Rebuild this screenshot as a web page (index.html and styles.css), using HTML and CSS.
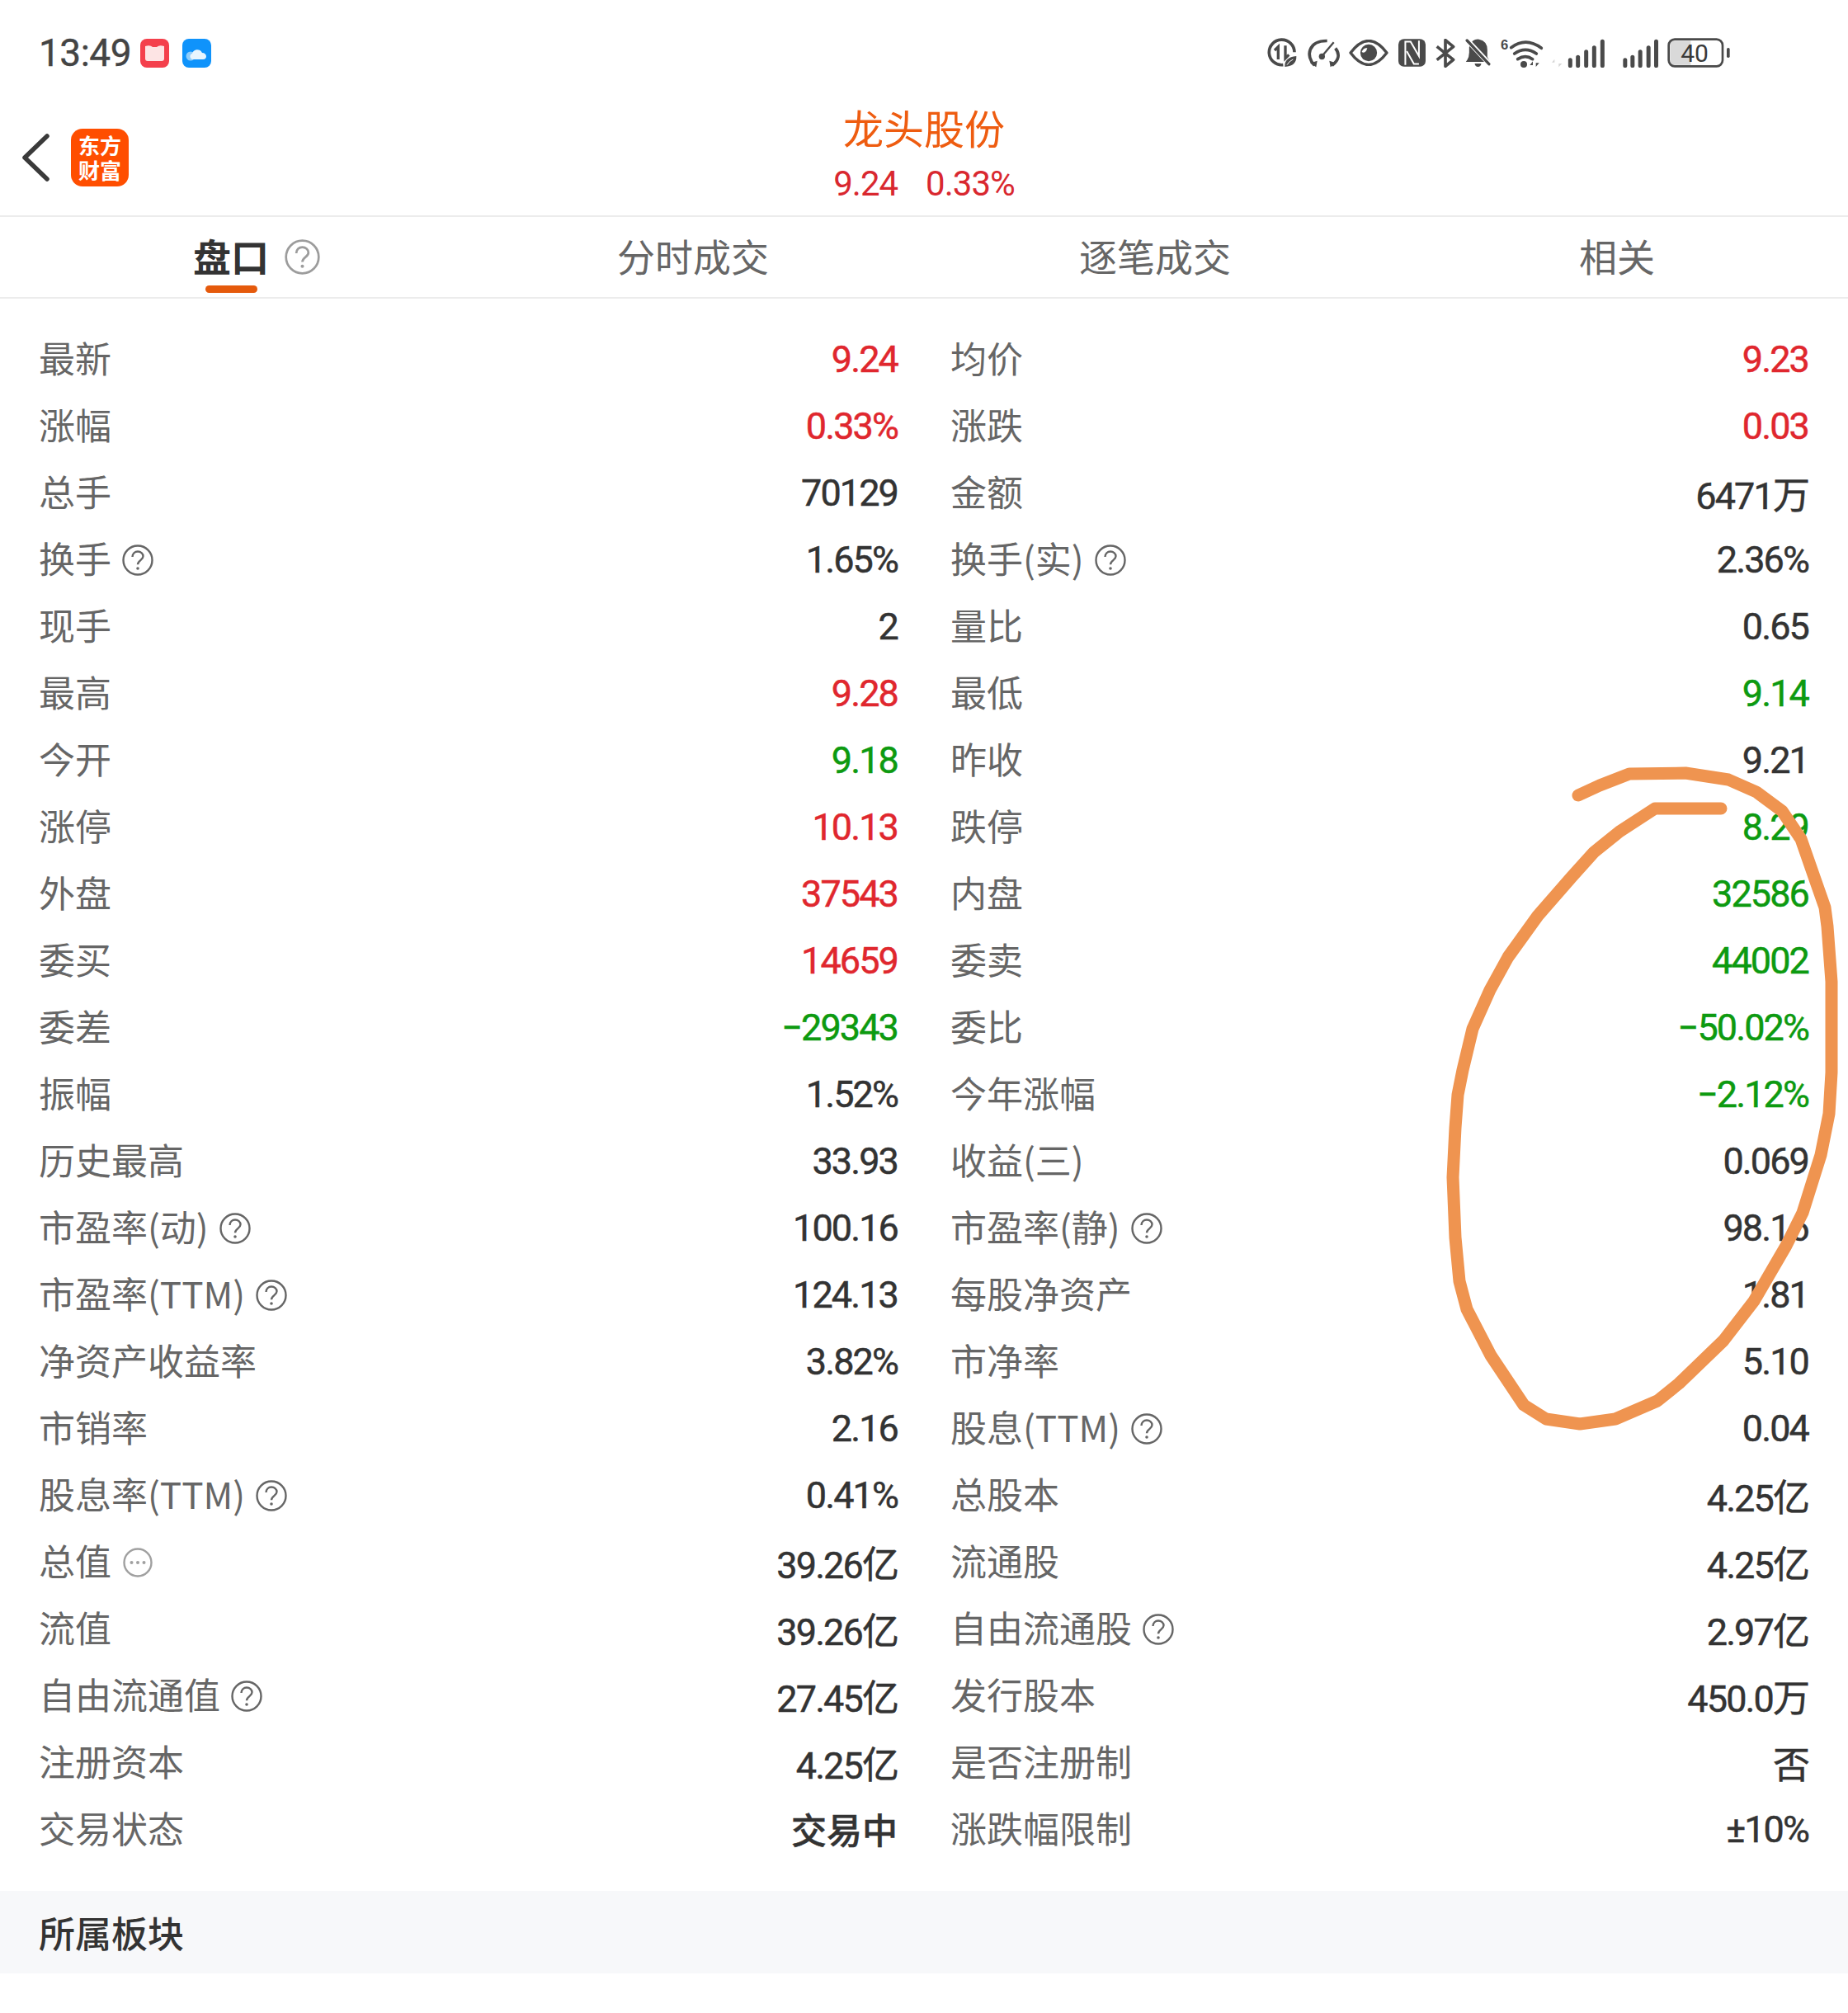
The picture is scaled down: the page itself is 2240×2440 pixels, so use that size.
FILE: index.html
```html
<!DOCTYPE html>
<html lang="zh-CN">

<head>
    <meta charset="UTF-8">
    <title>龙头股份 盘口</title>
    <link rel="stylesheet" href="styles.css">
</head>

<body>
    <svg class="defs" width="0" height="0">
        <symbol id="help" viewBox="0 0 38 38">
            <circle cx="19" cy="19" r="17.500" fill="none" stroke="currentColor" stroke-width="2.400" />
            <path d="M12.500 15c0-4 3-6.500 6.500-6.500s6.500 2.500 6.500 5.800c0 4.700-6.500 5-6.500 10" fill="none" stroke="currentColor" stroke-width="2.400" />
            <circle cx="19" cy="29" r="1.800" fill="currentColor" />
        </symbol>
        <symbol id="more" viewBox="0 0 38 38">
            <circle cx="19" cy="19" r="16.500" fill="none" stroke="currentColor" stroke-width="2.400" />
            <circle cx="11.500" cy="19" r="2" fill="currentColor" />
            <circle cx="19" cy="19" r="2" fill="currentColor" />
            <circle cx="26.500" cy="19" r="2" fill="currentColor" />
        </symbol>
    </svg>

    <div class="page">
        <!-- 状态栏 -->
        <div class="statusbar">
            <div class="status-left">
                <span class="clock">13:49</span>
                <svg class="app-icon" width="35" height="35" viewBox="0 0 35 35">
                    <rect width="35" height="35" rx="8" fill="#f4404c" />
                    <path d="M6 9q6-2 9 1h5q3-3 9-1v15q0 3-3 3H9q-3 0-3-3z" fill="#fde4e4" />
                </svg>
                <svg class="app-icon app-icon-cloud" width="35" height="35" viewBox="0 0 35 35">
                    <rect width="35" height="35" rx="8" fill="#0f93fb" />
                    <circle cx="10" cy="21" r="5.500" fill="#8fcdfb" />
                    <path d="M13 25c-4 0-5-6-1-7 1-5 9-7 12-1 6 0 7 8 1 8z" fill="#e8f5fe" />
                </svg>
            </div>
            <div class="status-right">
                <!-- 流量节省 -->
                <svg width="36" height="36" viewBox="0 0 108 108">
                    <path d="M58 98A46 46 0 1 1 99 52" fill="none" stroke="#4a4a4a" stroke-width="11" />
                    <path d="M40 78V32L27 45M66 28V74L79 61" fill="none" stroke="#4a4a4a" stroke-width="10" />
                    <path d="M64 105Q62 70 106 66Q108 102 64 105z" fill="#4a4a4a" />
                    <path d="M72 98Q80 84 94 78" fill="none" stroke="#fff" stroke-width="3" />
                </svg>
                <!-- 网速 -->
                <svg width="40" height="35" viewBox="0 0 120 104">
                    <path d="M28 96C-6 62 6 6 74 7" fill="none" stroke="#4a4a4a" stroke-width="11" />
                    <path d="M104 34C122 56 116 78 92 96" fill="none" stroke="#4a4a4a" stroke-width="11" />
                    <path d="M34 102L12 88L38 80zM86 102L108 88L82 80z" fill="#4a4a4a" />
                    <path d="M56 62L98 12" stroke="#4a4a4a" stroke-width="7" />
                    <circle cx="55" cy="64" r="11" fill="#4a4a4a" />
                </svg>
                <!-- 护眼 -->
                <svg width="48" height="32" viewBox="0 0 142 94">
                    <path d="M6 47Q71-39 136 47Q71 133 6 47z" fill="none" stroke="#4a4a4a" stroke-width="10" stroke-linejoin="round" />
                    <circle cx="71" cy="47" r="30" fill="#4a4a4a" />
                    <path d="M46 44Q60 52 66 30Q52 28 46 44z" fill="#fff" />
                </svg>
                <!-- NFC -->
                <svg width="33" height="34" viewBox="0 0 98 100">
                    <rect width="98" height="100" rx="20" fill="#4a4a4a" />
                    <path d="M25 94V10H44L74 62V6" fill="none" stroke="#fff" stroke-width="6" />
                    <path d="M74 90H56L30 44" fill="none" stroke="#fff" stroke-width="6" />
                </svg>
                <!-- 蓝牙 -->
                <svg width="26" height="35" viewBox="0 0 78 105">
                    <path d="M8 28L68 76L39 100V5L68 29L8 77" fill="none" stroke="#4a4a4a" stroke-width="11" stroke-linejoin="round" />
                </svg>
                <!-- 静音 -->
                <svg width="31" height="34" viewBox="0 0 92 102">
                    <path d="M26 8Q38 0 50 2Q80 8 80 40V66L90 84H2Q14 70 14 50V30z" fill="#4a4a4a" />
                    <path d="M34 90H58Q56 102 46 102Q36 102 34 90z" fill="#4a4a4a" />
                    <path d="M4 2L92 96" stroke="#fff" stroke-width="18" />
                    <path d="M6 6L86 92" stroke="#4a4a4a" stroke-width="10" stroke-linecap="round" />
                </svg>
                <!-- Wi-Fi -->
                <svg class="wifi" width="51" height="35" viewBox="0 0 153 105">
                    <text x="0" y="40" class="wifi-six">6</text>
                    <path d="M38 32Q92-8 148 34M50 54Q90 26 130 54M62 74Q90 56 116 74" fill="none" stroke="#4a4a4a" stroke-width="11" stroke-linecap="round" />
                    <circle cx="84" cy="93" r="12" fill="#4a4a4a" />
                    <path d="M117 104V82L106 96H117zM128 80V102L140 88H128z" fill="#4a4a4a" />
                </svg>
                <!-- 信号 -->
                <svg width="64" height="35" viewBox="0 0 192 105">
                    <path d="M10 105V74L0 86H10zM25 72V103L37 90H25z" fill="#d6d6d6" />
                    <path d="M67 77V98M95 67V98M125 47V98M154 32V98M184 10V98" stroke="#4a4a4a" stroke-width="15" stroke-linecap="round" />
                </svg>
                <svg class="signal-two" width="43" height="35" viewBox="0 0 128 105">
                    <path d="M8 77V98M35 67V98M63 47V98M93 32V98M121 10V98" stroke="#4a4a4a" stroke-width="15" stroke-linecap="round" />
                </svg>
                <!-- 电量 -->
                <svg class="battery" width="76" height="36" viewBox="0 0 228 108">
                    <path d="M10 16Q10 10 16 10H85V98H16Q10 98 10 92z" fill="#d9d9d9" />
                    <rect x="5" y="5" width="196" height="98" rx="22" fill="none" stroke="#4a4a4a" stroke-width="8" />
                    <rect x="216" y="36" width="11" height="36" rx="5" fill="#4a4a4a" />
                    <text x="99" y="86" class="battery-num">40</text>
                </svg>
            </div>
        </div>

        <!-- 标题 -->
        <header class="header">
            <div class="header-left">
                <svg class="back" width="34" height="58" viewBox="0 0 34 58">
                    <path d="M31 3L4 29l27 26" fill="none" stroke="#3a3a3a" stroke-width="5.500" stroke-linecap="round" stroke-linejoin="round" />
                </svg>
                <div class="logo">东方<br>财富</div>
            </div>
            <div class="header-title">
                <div class="stock-name">龙头股份</div>
                <div class="stock-quote"><span>9.24</span><span>0.33%</span></div>
            </div>
        </header>

        <!-- 选项卡 -->
        <nav class="tabs">
            <div class="tab tab-active">盘口
                <svg class="tab-help"><use href="#help" /></svg>
            </div>
            <div class="tab">分时成交</div>
            <div class="tab">逐笔成交</div>
            <div class="tab">相关</div>
        </nav>

        <!-- 盘口数据 -->
        <main class="quote-grid">
            <div class="cell"><span class="label">最新</span><span class="value up">9.24</span></div>
            <div class="cell"><span class="label">均价</span><span class="value up">9.23</span></div>
            <div class="cell"><span class="label">涨幅</span><span class="value up">0.33%</span></div>
            <div class="cell"><span class="label">涨跌</span><span class="value up">0.03</span></div>
            <div class="cell"><span class="label">总手</span><span class="value">70129</span></div>
            <div class="cell"><span class="label">金额</span><span class="value">6471万</span></div>
            <div class="cell"><span class="label">换手<svg class="tip"><use href="#help" /></svg></span><span class="value">1.65%</span></div>
            <div class="cell"><span class="label">换手(实)<svg class="tip"><use href="#help" /></svg></span><span class="value">2.36%</span></div>
            <div class="cell"><span class="label">现手</span><span class="value">2</span></div>
            <div class="cell"><span class="label">量比</span><span class="value">0.65</span></div>
            <div class="cell"><span class="label">最高</span><span class="value up">9.28</span></div>
            <div class="cell"><span class="label">最低</span><span class="value down">9.14</span></div>
            <div class="cell"><span class="label">今开</span><span class="value down">9.18</span></div>
            <div class="cell"><span class="label">昨收</span><span class="value">9.21</span></div>
            <div class="cell"><span class="label">涨停</span><span class="value up">10.13</span></div>
            <div class="cell"><span class="label">跌停</span><span class="value down">8.29</span></div>
            <div class="cell"><span class="label">外盘</span><span class="value up">37543</span></div>
            <div class="cell"><span class="label">内盘</span><span class="value down">32586</span></div>
            <div class="cell"><span class="label">委买</span><span class="value up">14659</span></div>
            <div class="cell"><span class="label">委卖</span><span class="value down">44002</span></div>
            <div class="cell"><span class="label">委差</span><span class="value down">−29343</span></div>
            <div class="cell"><span class="label">委比</span><span class="value down">−50.02%</span></div>
            <div class="cell"><span class="label">振幅</span><span class="value">1.52%</span></div>
            <div class="cell"><span class="label">今年涨幅</span><span class="value down">−2.12%</span></div>
            <div class="cell"><span class="label">历史最高</span><span class="value">33.93</span></div>
            <div class="cell"><span class="label">收益(三)</span><span class="value">0.069</span></div>
            <div class="cell"><span class="label">市盈率(动)<svg class="tip"><use href="#help" /></svg></span><span class="value">100.16</span></div>
            <div class="cell"><span class="label">市盈率(静)<svg class="tip"><use href="#help" /></svg></span><span class="value">98.16</span></div>
            <div class="cell"><span class="label">市盈率(TTM)<svg class="tip"><use href="#help" /></svg></span><span class="value">124.13</span></div>
            <div class="cell"><span class="label">每股净资产</span><span class="value">1.81</span></div>
            <div class="cell"><span class="label">净资产收益率</span><span class="value">3.82%</span></div>
            <div class="cell"><span class="label">市净率</span><span class="value">5.10</span></div>
            <div class="cell"><span class="label">市销率</span><span class="value">2.16</span></div>
            <div class="cell"><span class="label">股息(TTM)<svg class="tip"><use href="#help" /></svg></span><span class="value">0.04</span></div>
            <div class="cell"><span class="label">股息率(TTM)<svg class="tip"><use href="#help" /></svg></span><span class="value">0.41%</span></div>
            <div class="cell"><span class="label">总股本</span><span class="value">4.25亿</span></div>
            <div class="cell"><span class="label">总值<svg class="tip tip-more"><use href="#more" /></svg></span><span class="value">39.26亿</span></div>
            <div class="cell"><span class="label">流通股</span><span class="value">4.25亿</span></div>
            <div class="cell"><span class="label">流值</span><span class="value">39.26亿</span></div>
            <div class="cell"><span class="label">自由流通股<svg class="tip"><use href="#help" /></svg></span><span class="value">2.97亿</span></div>
            <div class="cell"><span class="label">自由流通值<svg class="tip"><use href="#help" /></svg></span><span class="value">27.45亿</span></div>
            <div class="cell"><span class="label">发行股本</span><span class="value">450.0万</span></div>
            <div class="cell"><span class="label">注册资本</span><span class="value">4.25亿</span></div>
            <div class="cell"><span class="label">是否注册制</span><span class="value">否</span></div>
            <div class="cell"><span class="label">交易状态</span><span class="value value-strong">交易中</span></div>
            <div class="cell"><span class="label">涨跌幅限制</span><span class="value">±10%</span></div>
        </main>

        <section class="section-bar">所属板块</section>

        <!-- 手写圈注 -->
        <svg class="ink" width="2240" height="2440" viewBox="0 0 2240 2440">
            <path d="M1913 964L1939 952L1975 938L2043 937L2095 945L2129 960L2160 983L2183 1017L2198 1060L2212 1100L2215 1123L2220 1190L2220 1300L2217 1350L2207 1400L2185 1470L2165 1510L2126 1577L2089 1625L2035 1677L2009 1698L1958 1720L1915 1726L1874 1720L1847 1703L1807 1643L1778 1587L1769 1553L1764 1500L1761 1427L1764 1367L1767 1327L1773 1297L1785 1247L1806 1200L1828 1160L1864 1110L1905 1063L1932 1033L1963 1008L2006 980L2086 980" fill="none" stroke="#ef9450" stroke-width="15" stroke-linecap="round" stroke-linejoin="round" />
        </svg>
    </div>
</body>

</html>
```

FILE: styles.css
```css
* {
    box-sizing: border-box;
}

body {
    margin: 0;
    background-color: #fff;
    color: #333;
    font-family: Roboto, "Noto Sans CJK SC", sans-serif;
}

.defs {
    position: absolute;
}

.page {
    position: relative;
    width: 2240px;
    height: 2440px;
    overflow: hidden;
}

.statusbar {
    display: flex;
    justify-content: space-between;
    align-items: center;
    height: 128px;
    padding: 0 143px 0 47px;
}

.status-left {
    display: flex;
    align-items: center;
    gap: 11px;
}

.clock {
    font-size: 46px;
    letter-spacing: -0.5px;
    color: #444;
    -webkit-text-stroke: 0.4px #444;
}

.app-icon-cloud {
    margin-left: 5px;
}

.status-right {
    display: flex;
    align-items: center;
    gap: 11.4px;
}

.signal-two {
    margin-left: 10px;
}

.wifi {
    overflow: visible;
}

.wifi-six {
    font-family: "Liberation Sans", sans-serif;
    font-size: 50px;
    font-weight: bold;
    fill: #4a4a4a;
}

.battery-num {
    font-family: Roboto, sans-serif;
    font-size: 90px;
    text-anchor: middle;
    fill: #3a3a3a;
}

.header {
    display: grid;
    grid-template-columns: 1fr auto 1fr;
    align-items: center;
    height: 135px;
    border-bottom: 2px solid #ececec;
}

.header-left {
    display: flex;
    align-items: center;
    gap: 26px;
    padding: 0 0 8px 26px;
}

.logo {
    display: flex;
    align-items: center;
    justify-content: center;
    width: 70px;
    height: 70px;
    border-radius: 14px;
    background-color: #ff4e00;
    color: #fff;
    font-family: "Noto Sans CJK SC", sans-serif;
    font-size: 26px;
    font-weight: 700;
    line-height: 30px;
    text-align: center;
    display: block;
    padding-top: 5px;
}

.header-title {
    text-align: center;
}

.stock-name {
    margin-top: -16px;
    margin-bottom: 12px;
    font-family: "Noto Sans CJK SC", sans-serif;
    font-size: 49px;
    line-height: 60px;
    color: #ee5c10;
}

.stock-quote {
    display: flex;
    justify-content: center;
    gap: 34px;
    font-size: 42px;
    line-height: 54px;
    letter-spacing: -1px;
    color: #d9282f;
}

.tabs {
    display: grid;
    grid-template-columns: repeat(4, 1fr);
    height: 99px;
    border-bottom: 2px solid #ececec;
}

.tab {
    position: relative;
    display: flex;
    align-items: center;
    justify-content: center;
    padding-bottom: 5px;
    font-family: "Noto Sans CJK SC", sans-serif;
    font-size: 46px;
    color: #666;
}

.tab-active {
    font-weight: 700;
    color: #333;
}

.tab-active::after {
    content: "";
    position: absolute;
    left: 249px;
    bottom: 5px;
    width: 63px;
    height: 9px;
    border-radius: 5px;
    background-color: #e55a0c;
}

.tab-help {
    position: absolute;
    left: 345px;
    top: 27px;
    width: 43px;
    height: 43px;
    color: #9c9c9c;
}

.quote-grid {
    display: grid;
    grid-template-columns: 1041px 1040px;
    column-gap: 64px;
    grid-auto-rows: 81px;
    padding: 33px 48px 0 47px;
}

.cell {
    display: flex;
    align-items: center;
    justify-content: space-between;
}

.label {
    display: flex;
    align-items: center;
    padding-bottom: 5px;
    font-family: "Noto Sans CJK SC", sans-serif;
    font-size: 44px;
    color: #666;
}

.tip {
    width: 38px;
    height: 38px;
    margin-left: 13px;
    margin-top: 5px;
    color: #666;
}

.tip-more {
    color: #a0a0a0;
}

.value {
    font-size: 45px;
    letter-spacing: -1.9px;
    color: #333;
    -webkit-text-stroke: 0.5px currentColor;
}

.value-strong {
    padding-bottom: 4px;
    font-family: "Noto Sans CJK SC", sans-serif;
    font-size: 43px;
    font-weight: 500;
    letter-spacing: 0;
}

.up {
    color: #e0272e;
}

.down {
    color: #0d9a10;
}

.section-bar {
    display: flex;
    align-items: center;
    height: 100px;
    margin-top: 34px;
    padding-left: 47px;
    background-color: #f7f8fa;
    font-family: "Noto Sans CJK SC", sans-serif;
    font-size: 44px;
    font-weight: 500;
    color: #333;
}

.ink {
    position: absolute;
    left: 0;
    top: 0;
    pointer-events: none;
}
```
